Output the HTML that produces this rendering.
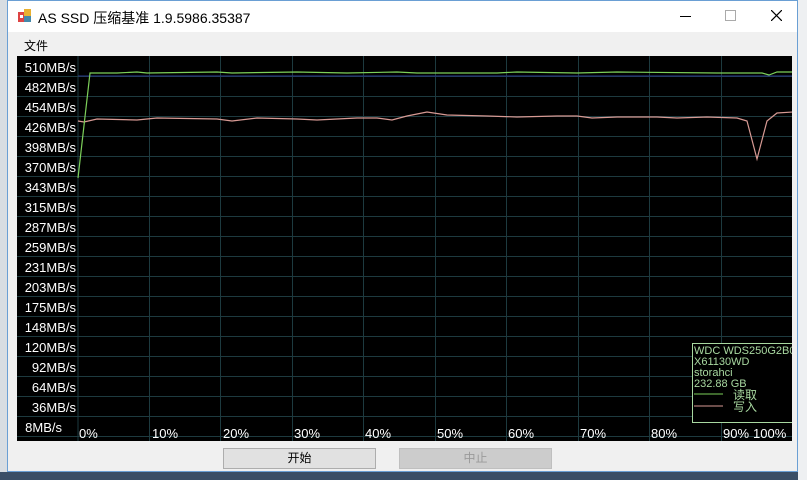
<!DOCTYPE html>
<html><head><meta charset="utf-8"><style>
body{margin:0;width:807px;height:480px;overflow:hidden;background:#d8dde2;font-family:"Liberation Sans","Noto Sans CJK SC",sans-serif;position:relative}
.win{position:absolute;left:7px;top:0;width:791px;height:472px;background:#f0f0f0;border:1px solid #6a9fd4;box-sizing:border-box}
.title{position:absolute;left:0;top:0;right:0;height:31px;background:#fff}
.title .t{position:absolute;left:30px;top:7px;font-size:14px;color:#000}
.menu{position:absolute;left:16px;top:36px;font-size:12px}
.btn{position:absolute;top:448px;height:21px;width:153px;box-sizing:border-box;border:1px solid #adadad;background:#e1e1e1;font-size:12px;text-align:center;line-height:19px}
svg text{font-family:"Liberation Sans","Noto Sans CJK SC",sans-serif}
</style></head><body>
<div style="position:absolute;left:0;top:472px;width:807px;height:8px;background:#3a4e66"></div>
<div style="position:absolute;left:798px;top:0;width:9px;height:480px;background:#eef0f2"></div>
<div class="win">
<div class="title">
<svg style="position:absolute;left:10px;top:8px" width="14" height="14"><rect x="0" y="3" width="6" height="10" fill="#d44"/><rect x="6" y="0" width="7" height="7" fill="#e8b030"/><rect x="6" y="7" width="7" height="6" fill="#48a"/><rect x="2" y="6" width="3" height="3" fill="#fff"/></svg>
<div class="t">AS SSD 压缩基准 1.9.5986.35387</div>
<div style="position:absolute;left:672px;top:15px;width:11px;height:1px;background:#000"></div>
<div style="position:absolute;left:717px;top:9px;width:9px;height:9px;border:1px solid #aaa"></div>
<svg style="position:absolute;left:763px;top:9px" width="11" height="11"><path d="M0 0L11 11M11 0L0 11" stroke="#000" stroke-width="1.2"/></svg>
</div>
<div class="menu">文件</div>
</div>
<svg style="position:absolute;left:17px;top:56px" width="775" height="385">
<rect width="775" height="385" fill="#000"/>
<g stroke="#1d3a3f" stroke-width="1">
<line x1="61" y1="0" x2="61" y2="385"/><line x1="132.5" y1="0" x2="132.5" y2="385"/><line x1="203.5" y1="0" x2="203.5" y2="385"/><line x1="275.5" y1="0" x2="275.5" y2="385"/><line x1="346.5" y1="0" x2="346.5" y2="385"/><line x1="418.5" y1="0" x2="418.5" y2="385"/><line x1="489.5" y1="0" x2="489.5" y2="385"/><line x1="561.5" y1="0" x2="561.5" y2="385"/><line x1="632.5" y1="0" x2="632.5" y2="385"/><line x1="704.5" y1="0" x2="704.5" y2="385"/>
<line x1="0" y1="20.5" x2="776" y2="20.5"/><line x1="0" y1="40.5" x2="776" y2="40.5"/><line x1="0" y1="60.5" x2="776" y2="60.5"/><line x1="0" y1="80.5" x2="776" y2="80.5"/><line x1="0" y1="100.5" x2="776" y2="100.5"/><line x1="0" y1="120.5" x2="776" y2="120.5"/><line x1="0" y1="140.5" x2="776" y2="140.5"/><line x1="0" y1="160.5" x2="776" y2="160.5"/><line x1="0" y1="180.5" x2="776" y2="180.5"/><line x1="0" y1="200.5" x2="776" y2="200.5"/><line x1="0" y1="220.5" x2="776" y2="220.5"/><line x1="0" y1="240.5" x2="776" y2="240.5"/><line x1="0" y1="260.5" x2="776" y2="260.5"/><line x1="0" y1="280.5" x2="776" y2="280.5"/><line x1="0" y1="300.5" x2="776" y2="300.5"/><line x1="0" y1="320.5" x2="776" y2="320.5"/><line x1="0" y1="340.5" x2="776" y2="340.5"/><line x1="0" y1="360.5" x2="776" y2="360.5"/><line x1="0" y1="380.5" x2="776" y2="380.5"/>
</g>
<line x1="61" y1="20" x2="776" y2="20" stroke="#2a3a8a"/>
<g fill="#fff" font-size="13" text-anchor="end">
<text x="59" y="16">510MB/s</text><text x="59" y="36">482MB/s</text><text x="59" y="56">454MB/s</text><text x="59" y="76">426MB/s</text><text x="59" y="96">398MB/s</text><text x="59" y="116">370MB/s</text><text x="59" y="136">343MB/s</text><text x="59" y="156">315MB/s</text><text x="59" y="176">287MB/s</text><text x="59" y="196">259MB/s</text><text x="59" y="216">231MB/s</text><text x="59" y="236">203MB/s</text><text x="59" y="256">175MB/s</text><text x="59" y="276">148MB/s</text><text x="59" y="296">120MB/s</text><text x="59" y="316">92MB/s</text><text x="59" y="336">64MB/s</text><text x="59" y="356">36MB/s</text><text x="45" y="376">8MB/s</text>
</g>
<g fill="#fff" font-size="13">
<text x="62" y="382">0%</text><text x="135" y="382">10%</text><text x="206" y="382">20%</text><text x="277" y="382">30%</text><text x="348" y="382">40%</text><text x="420" y="382">50%</text><text x="491" y="382">60%</text><text x="563" y="382">70%</text><text x="634" y="382">80%</text><text x="706" y="382">90%</text><text x="736" y="382">100%</text>
</g>
<polyline fill="none" stroke="#d89a94" stroke-width="1.2" points="61,65 67,66 80,63 120,64 140,62 200,63 215,65 240,62 280,63 300,64 340,62 360,62 375,64 390,60 410,56 430,59 470,60 500,61 540,60 560,60 575,62 600,61 640,61 660,62 690,61 720,62 730,65 740,103 750,65 760,57 776,56"/>
<polyline fill="none" stroke="#7dd05a" stroke-width="1.2" points="61,122 73,17 100,17 120,16 130,17 200,16 215,17 280,16 330,17 380,16 400,17 480,17 500,16 560,17 600,16 700,17 745,17 752,19 760,16 776,16"/>
<rect x="675.5" y="287.5" width="110" height="79" fill="#000" stroke="#a8d8a0"/>
<g fill="#a8d8a0" font-size="11">
<text x="677" y="298">WDC WDS250G2B0</text><text x="677" y="309">X61130WD</text><text x="677" y="320">storahci</text><text x="677" y="331">232.88 GB</text>
<text x="716" y="343" font-size="12">读取</text><text x="716" y="355" font-size="12">写入</text>
</g>
<line x1="677" y1="338" x2="706" y2="338" stroke="#7dd05a"/>
<line x1="677" y1="350" x2="706" y2="350" stroke="#d89a94"/>
</svg>
<div class="btn" style="left:223px">开始</div>
<div class="btn" style="left:399px;color:#9a9a9a;background:#cccccc;border-color:#bfbfbf">中止</div>
</body></html>
